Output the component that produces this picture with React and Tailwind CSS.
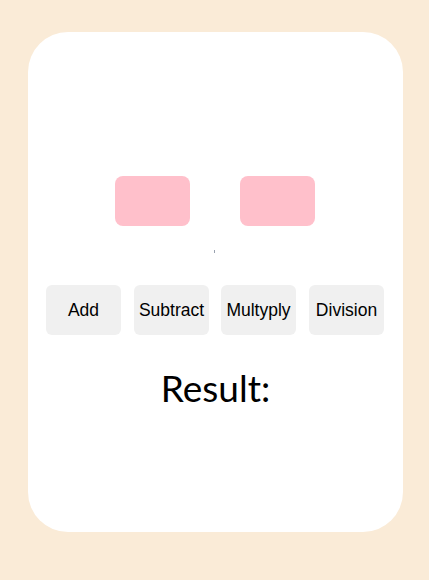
import React, { useState } from "react";

function App() {
  const [a, setA] = useState("");
  const [b, setB] = useState("");

  return (
    <div className="flex h-[580px] w-full items-start justify-center bg-[#faebd7] pl-[2px] pt-8">
      <div className="flex h-[500px] w-[375px] flex-col items-center rounded-[40px] bg-white pt-[144px]">
        <div className="mr-[2px] flex gap-[50px]">
          <input
            value={a}
            onChange={(e) => setA(e.target.value)}
            className="h-[50px] w-[75px] rounded-lg bg-[#ffc0cb] outline-none"
          />
          <input
            value={b}
            onChange={(e) => setB(e.target.value)}
            className="h-[50px] w-[75px] rounded-lg bg-[#ffc0cb] outline-none"
          />
        </div>
        <span className="mr-[2px] mt-6 block h-[3px] w-px bg-gray-400" />
        <div className="mt-8 flex w-full gap-[13px] px-[18px] font-['Liberation_Sans',Arial,sans-serif] text-[17.5px] text-black">
          <button className="h-[50px] w-[75px] rounded-md bg-[#f0f0f0]">Add</button>
          <button className="h-[50px] w-[75px] rounded-md bg-[#f0f0f0]">Subtract</button>
          <button className="ml-[-1px] h-[50px] w-[75px] rounded-md bg-[#f0f0f0]">Multyply</button>
          <button className="h-[50px] w-[75px] rounded-md bg-[#f0f0f0]">Division</button>
        </div>
        <h1 className="mt-[29px] font-['Gill_Sans','Lato',sans-serif] text-[37px] leading-[48px] text-black">
          Result:
        </h1>
      </div>
    </div>
  );
}

export default App;
